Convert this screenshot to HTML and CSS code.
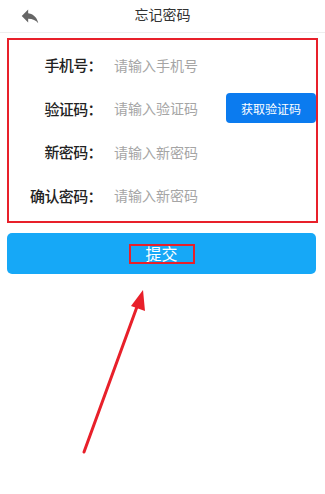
FILE: index.html
```html
<!DOCTYPE html>
<html lang="zh">
<head>
<meta charset="utf-8">
<link rel="stylesheet" href="styles.css">
</head>
<body>
<div class="page">
  <header class="topbar">
    <svg class="back" viewBox="0 0 24 24" width="22" height="22"><path d="M10 9V5l-7 7 7 7v-4.1c5 0 8.5 1.6 11 5.1-1-5-4-10-11-11z" fill="#666"/></svg>
    <div class="title">忘记密码</div>
  </header>
  <div class="form">
    <div class="row"><span class="label">手机号：</span><span class="ph">请输入手机号</span></div>
    <div class="row"><span class="label">验证码：</span><span class="ph">请输入验证码</span><span class="code-btn">获取验证码</span></div>
    <div class="row"><span class="label">新密码：</span><span class="ph">请输入新密码</span></div>
    <div class="row"><span class="label">确认密码：</span><span class="ph">请输入新密码</span></div>
  </div>
  <div class="submit"><span class="submit-text">提交</span></div>
  <svg class="arrow" width="325" height="494" viewBox="0 0 325 494">
    <line x1="84" y1="452" x2="138" y2="304" stroke="#e8202a" stroke-width="3" stroke-linecap="round"/>
    <polygon points="143,290 145,311 131,306" fill="#e8202a"/>
  </svg>
</div>
</body>
</html>
```
FILE: styles.css
```css
* { box-sizing: border-box; }
html, body { margin: 0; padding: 0; background: #fff; }
body {
  font-family: "Noto Sans CJK SC", "Noto Sans", sans-serif;
  color: #333;
}
.page { position: relative; width: 325px; height: 494px; overflow: hidden; }
.topbar {
  position: relative;
  height: 33px;
  display: flex;
  align-items: center;
  justify-content: center;
  border-bottom: 1px solid #eeeeee;
}
.back { position: absolute; left: 19px; top: 5px; }
.title { font-size: 14px; color: #333; line-height: 20px; margin-top: -4px; }
.form {
  margin: 5px 7px 0 7px;
  height: 185px;
  border: 2.5px solid #e8202a;
  padding: 3px 0 0 0;
  display: flex;
  flex-direction: column;
}
.row {
  height: 43.5px;
  display: flex;
  align-items: center;
}
.label {
  width: 93px;
  text-align: right;
  font-size: 15px;
  font-weight: 500;
  color: #222;
  letter-spacing: -0.6px;
  flex: none;
}
.ph {
  margin-left: 12px;
  font-size: 14px;
  color: #a5a5a5;
  flex: 1;
}
.code-btn {
  width: 90px;
  height: 30px;
  background: #0b7bef;
  color: #fff;
  font-size: 12px;
  border-radius: 4px;
  display: flex;
  align-items: center;
  justify-content: center;
}
.submit {
  margin: 10px 9px 0 7px;
  height: 41px;
  background: #16a8f7;
  border-radius: 5px;
  display: flex;
  align-items: center;
  justify-content: center;
}
.submit-text {
  width: 66px;
  height: 20px;
  border: 2.5px solid #e8202a;
  color: #fff;
  font-size: 16px;
  line-height: 15px;
  text-align: center;
}
.arrow { position: absolute; left: 0; top: 0; pointer-events: none; }
```
